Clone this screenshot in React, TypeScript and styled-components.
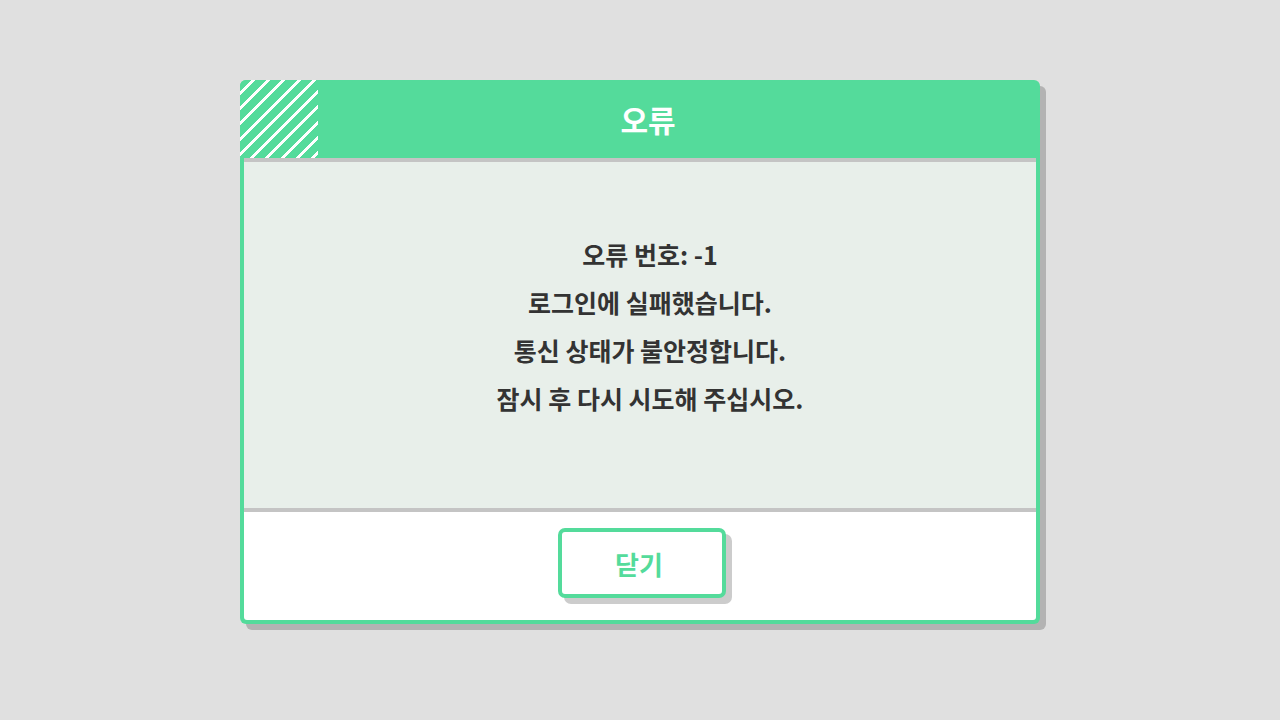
import React from "react";
import styled, { createGlobalStyle } from "styled-components";

const GREEN = "#54db9b";

const GlobalStyle = createGlobalStyle`
  html, body {
    margin: 0;
    padding: 0;
    background: #e0e0e0;
    font-family: "Noto Sans CJK KR", "Noto Sans", sans-serif;
  }
`;

const Page = styled.div`
  display: flex;
  justify-content: center;
  align-items: flex-start;
  padding-top: 80px;
  min-height: 720px;
  box-sizing: border-box;
`;

const Dialog = styled.div`
  width: 800px;
  background: ${GREEN};
  border-radius: 6px;
  box-shadow: 6px 6px 0 #b3b3b3;
  overflow: hidden;
  display: flex;
  flex-direction: column;
`;

const Header = styled.div`
  height: 78px;
  display: flex;
  align-items: center;
`;

const Stripes = styled.div`
  width: 78px;
  height: 78px;
  flex-shrink: 0;
  background: repeating-linear-gradient(
    135deg,
    ${GREEN} 0px,
    ${GREEN} 8px,
    #ffffff 8px,
    #ffffff 10.8px
  );
`;

const Title = styled.h1`
  flex: 1;
  margin: 0;
  padding-right: 62px;
  text-align: center;
  color: #fff;
  font-size: 30px;
  font-weight: 700;
  line-height: 78px;
`;

const Panel = styled.div`
  margin: 0 4px 4px;
  border-radius: 0 0 3px 3px;
  overflow: hidden;
  display: flex;
  flex-direction: column;
`;

const Body = styled.div`
  height: 354px;
  border-top: 4px solid #c4c4c4;
  border-bottom: 4px solid #c4c4c4;
  background: #e8efea;
  display: flex;
  flex-direction: column;
  align-items: center;
  justify-content: center;
  padding: 0 0 18px 20px;
  box-sizing: border-box;
`;

const Line = styled.p`
  margin: 0;
  font-size: 25px;
  font-weight: 700;
  line-height: 48px;
  color: #333;
`;

const Footer = styled.div`
  height: 108px;
  background: #fff;
  display: flex;
  justify-content: center;
  align-items: flex-start;
  padding-top: 16px;
  box-sizing: border-box;
`;

const CloseButton = styled.button`
  width: 168px;
  height: 70px;
  margin-left: 4px;
  padding: 0 6px 0 0;
  background: #fff;
  border: 4px solid ${GREEN};
  border-radius: 7px;
  box-shadow: 6px 6px 0 #cccccc;
  color: ${GREEN};
  font-family: inherit;
  font-size: 26px;
  font-weight: 700;
  cursor: pointer;
`;

const lines = [
  "오류 번호: -1",
  "로그인에 실패했습니다.",
  "통신 상태가 불안정합니다.",
  "잠시 후 다시 시도해 주십시오.",
];

export default function App() {
  return (
    <>
      <GlobalStyle />
      <Page>
        <Dialog>
          <Header>
            <Stripes />
            <Title>오류</Title>
          </Header>
          <Panel>
            <Body>
              {lines.map((l) => (
                <Line key={l}>{l}</Line>
              ))}
            </Body>
            <Footer>
              <CloseButton>닫기</CloseButton>
            </Footer>
          </Panel>
        </Dialog>
      </Page>
    </>
  );
}
